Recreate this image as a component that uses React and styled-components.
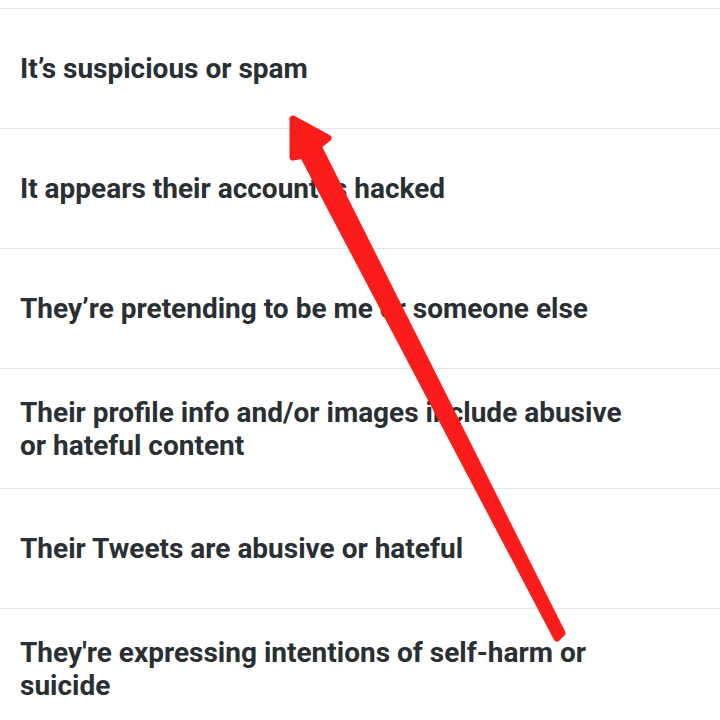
import React from "react";
import styled, { createGlobalStyle } from "styled-components";

const GlobalStyle = createGlobalStyle`
  html, body {
    margin: 0;
    padding: 0;
    background: #fff;
  }
  body {
    font-family: Roboto, "Noto Sans", "Liberation Sans", sans-serif;
    overflow: hidden;
  }
`;

const Screen = styled.div`
  position: relative;
  width: 720px;
  height: 720px;
  overflow: hidden;
  background: #fff;
  padding-top: 8px;
  box-sizing: border-box;
`;

const List = styled.div`
  display: flex;
  flex-direction: column;
  border-top: 1px solid #e1e8ed;
`;

const Row = styled.div`
  display: flex;
  align-items: center;
  min-height: 120px;
  padding: 0 20px;
  border-bottom: 1px solid #e1e8ed;
  box-sizing: border-box;
`;

const Label = styled.span`
  max-width: 615px;
  font-size: 28px;
  font-weight: 700;
  line-height: 33px;
  color: #292f33;
`;

const Overlay = styled.svg`
  position: absolute;
  left: 0;
  top: 0;
  pointer-events: none;
`;

const reasons = [
  "It\u2019s suspicious or spam",
  "It appears their account is hacked",
  "They\u2019re pretending to be me or someone else",
  "Their profile info and/or images include abusive or hateful content",
  "Their Tweets are abusive or hateful",
  "They're expressing intentions of self-harm or suicide",
];

function Arrow() {
  return (
    <Overlay width="720" height="720" viewBox="0 0 720 720">
      <polygon
        points="293,119 328,138 318,146 562,633 557,638 303,155 293,157"
        fill="#fb1c1c"
        stroke="#fb1c1c"
        strokeWidth="7"
        strokeLinejoin="round"
      />
    </Overlay>
  );
}

export default function App() {
  return (
    <>
      <GlobalStyle />
      <Screen>
        <List>
          {reasons.map((text) => (
            <Row key={text}>
              <Label>{text}</Label>
            </Row>
          ))}
        </List>
        <Arrow />
      </Screen>
    </>
  );
}
